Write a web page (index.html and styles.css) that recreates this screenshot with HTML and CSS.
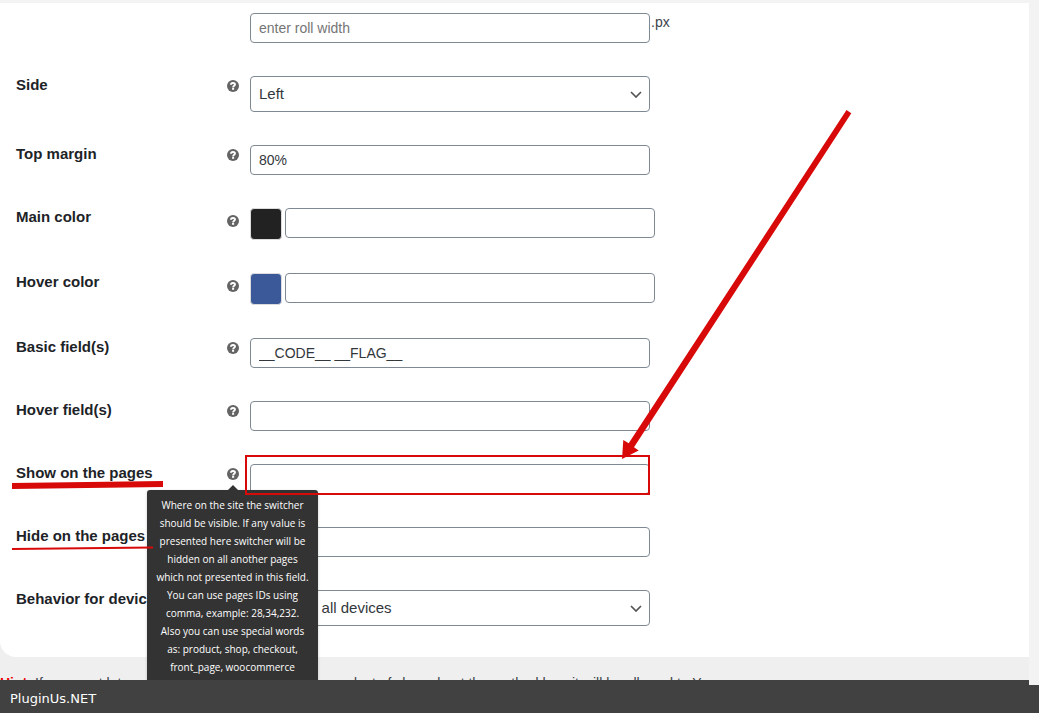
FILE: index.html
```html
<!DOCTYPE html>
<html lang="en">
<head>
  <meta charset="UTF-8">
  <meta name="viewport" content="width=device-width, initial-scale=1">
  <title>Side switcher options</title>
  <link rel="stylesheet" href="styles.css">
</head>
<body>

<svg class="sprite" aria-hidden="true">
  <symbol id="help" viewBox="0 0 12 12">
    <circle cx="6" cy="6" r="6" fill="#646464"/>
    <path d="M4 4.800C4 2.500 8 2.500 8 4.500C8 5.800 6.100 5.800 6.100 7.400" fill="none" stroke="#fff" stroke-width="1.900"/>
    <rect x="5.100" y="8" width="2" height="1.800" fill="#fff"/>
  </symbol>
</svg>

<main class="page">
  <form class="panel">

    <div class="row">
      <div class="field">
        <input class="text" type="text" placeholder="enter roll width" aria-label="Roll width">
        <span class="unit">.px</span>
      </div>
    </div>

    <div class="row">
      <label class="title" for="side">Side</label>
      <svg class="help"><use href="#help"/></svg>
      <div class="field">
        <div class="select">
          <select id="side"><option>Left</option><option>Right</option></select>
          <svg class="chevron" viewBox="0 0 12 7"><path d="M1 1l5 5 5-5"/></svg>
        </div>
      </div>
    </div>

    <div class="row">
      <label class="title" for="margin">Top margin</label>
      <svg class="help"><use href="#help"/></svg>
      <div class="field"><input class="text" id="margin" type="text" value="80%"></div>
    </div>

    <div class="row color-row">
      <label class="title" for="main-color">Main color</label>
      <svg class="help"><use href="#help"/></svg>
      <div class="field">
        <button class="swatch dark" type="button" aria-label="Pick main color"></button>
        <input class="text" id="main-color" type="text">
      </div>
    </div>

    <div class="row color-row">
      <label class="title" for="hover-color">Hover color</label>
      <svg class="help"><use href="#help"/></svg>
      <div class="field">
        <button class="swatch blue" type="button" aria-label="Pick hover color"></button>
        <input class="text" id="hover-color" type="text">
      </div>
    </div>

    <div class="row">
      <label class="title" for="basic">Basic field(s)</label>
      <svg class="help"><use href="#help"/></svg>
      <div class="field"><input class="text" id="basic" type="text" value="__CODE__ __FLAG__"></div>
    </div>

    <div class="row">
      <label class="title" for="hover">Hover field(s)</label>
      <svg class="help"><use href="#help"/></svg>
      <div class="field"><input class="text" id="hover" type="text"></div>
    </div>

    <div class="row">
      <label class="title" for="show">Show on the pages</label>
      <svg class="help"><use href="#help"/></svg>
      <div class="field"><input class="text" id="show" type="text"></div>
      <svg class="underline thick" viewBox="0 0 151 8"><path d="M0 2L151 0V6L0 8Z"/></svg>
      <div class="marker"></div>
      <div class="tooltip" role="tooltip">Where on the site the switcher should be visible. If any value is presented here switcher will be hidden on all another pages which not presented in this field. You can use pages IDs using comma, example: 28,34,232. Also you can use special words as: product, shop, checkout, front_page, woocommerce</div>
    </div>

    <div class="row">
      <label class="title" for="hide">Hide on the pages</label>
      <svg class="help"><use href="#help"/></svg>
      <div class="field"><input class="text" id="hide" type="text"></div>
      <svg class="underline thin" viewBox="0 0 141 4"><path d="M0 2L141 0.500V2.500L0 4Z"/></svg>
    </div>

    <div class="row">
      <label class="title" for="behavior">Behavior for devices</label>
      <svg class="help"><use href="#help"/></svg>
      <div class="field">
        <div class="select">
          <select id="behavior"><option>Show on all devices</option></select>
          <svg class="chevron" viewBox="0 0 12 7"><path d="M1 1l5 5 5-5"/></svg>
        </div>
      </div>
    </div>

    <svg class="arrow" viewBox="0 0 230 350">
      <path d="M224.500 0L229.300 3.300L12 337.200L16.700 340.500L0 349L1.300 330L6.700 333.300Z"/>
    </svg>
  </form>

  <p class="hint"><b>Hint</b>: If you want let your customers to switch have a product of shop about the method how it will be allowed to You</p>
</main>

<div class="rail"></div>
<footer class="bar">PluginUs.NET</footer>

</body>
</html>
```

FILE: styles.css
```css
* {
  box-sizing: border-box;
}

body {
  display: flex;
  flex-direction: column;
  margin: 0;
  height: 100vh;
  overflow: hidden;
  background: #f3f3f3;
  color: #3c434a;
  font-family: "Liberation Sans", Arial, sans-serif;
  font-size: 14px;
}

.sprite {
  position: absolute;
  width: 0;
  height: 0;
}

.page {
  flex: 1;
  min-height: 0;
  overflow: hidden;
  margin: 3px 10px 0 0;
  background: #efefef;
}

.panel {
  position: relative;
  display: flex;
  flex-direction: column;
  gap: 33px;
  padding: 10px 16px 31px;
  background: #fff;
  border-radius: 0 0 0 16px;
}

.row {
  position: relative;
  display: grid;
  grid-template-columns: 211px 23px 1fr;
  align-items: start;
}

.title {
  color: #1d2327;
  font-size: 15px;
  font-weight: bold;
  line-height: 18px;
  white-space: nowrap;
}

.help {
  width: 12px;
  height: 12px;
  margin-top: 4px;
}

.color-row .help {
  margin-top: 7px;
}

.field {
  grid-column: 3;
  display: flex;
  align-items: flex-start;
}

.text {
  width: 400px;
  height: 30px;
  padding: 0 8px;
  border: 1px solid #7e8993;
  border-radius: 4px;
  background: #fff;
  color: #32373c;
  font: 14px "Liberation Sans", Arial, sans-serif;
}

.text::placeholder {
  color: #757575;
}

.unit {
  padding-left: 1px;
  line-height: 18px;
}

.color-row .field {
  gap: 3px;
  height: 32px;
}

.color-row .text {
  width: 370px;
}

.swatch {
  width: 32px;
  height: 32px;
  padding: 0;
  border: 1px solid #dcdcde;
  border-radius: 4px;
}

.dark {
  background: #222;
}

.blue {
  background: #3b5998;
}

.select {
  position: relative;
  width: 400px;
}

.select select {
  display: block;
  appearance: none;
  width: 100%;
  height: 36px;
  padding: 0 24px 2px 8px;
  border: 1px solid #7e8993;
  border-radius: 4px;
  background: #fff;
  color: #32373c;
  font: 15px "Liberation Sans", Arial, sans-serif;
}

.chevron {
  position: absolute;
  top: 15px;
  right: 8px;
  width: 12px;
  height: 7px;
  pointer-events: none;
}

.chevron path {
  fill: none;
  stroke: #555;
  stroke-width: 1.700;
}

/* red notes drawn over the form */
.underline {
  position: absolute;
  left: -4px;
  fill: #d80909;
}

.thick {
  top: 17px;
  width: 151px;
  height: 8px;
}

.thin {
  top: 19px;
  width: 141px;
  height: 4px;
  z-index: 4;
}

.marker {
  position: absolute;
  top: -9px;
  left: 229px;
  width: 405px;
  height: 40px;
  border: 2px solid #d80909;
  z-index: 4;
}

.arrow {
  position: absolute;
  top: 107px;
  left: 622px;
  width: 230px;
  height: 350px;
  fill: #d80909;
  z-index: 4;
}

.tooltip {
  position: absolute;
  top: 26px;
  left: 131px;
  width: 171px;
  padding: 6px 8px 20px;
  background: #333;
  border-radius: 3px;
  box-shadow: 0 1px 3px #0003;
  color: #fff;
  font: 500 10px/18px "Open Sans", sans-serif;
  text-align: center;
  z-index: 3;
}

.tooltip::before {
  content: "";
  position: absolute;
  top: -5px;
  left: 81px;
  border: 5px solid transparent;
  border-top: 0;
  border-bottom-color: #333;
}

.hint {
  margin: 0;
  padding: 17px 0 0;
  line-height: 18px;
  white-space: nowrap;
}

.hint b {
  color: #e00;
}

.rail {
  position: fixed;
  top: 0;
  right: 0;
  bottom: 28px;
  width: 10px;
  background: #f3f3f3;
}

.bar {
  padding: 10px 10px 5px;
  background: #414141;
  color: #fff;
  font: 13px/18px "DejaVu Sans", sans-serif;
}
```
